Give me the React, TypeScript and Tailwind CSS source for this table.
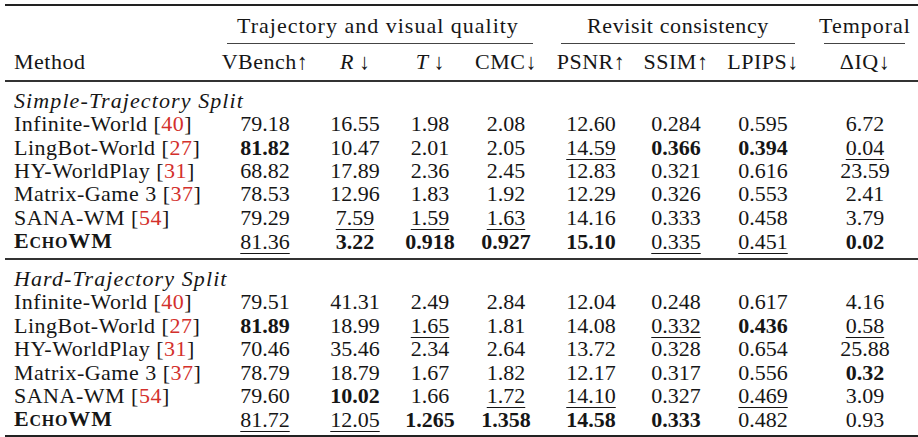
import React from "react";

type Cell = { v: string; b?: boolean; u?: boolean };

interface Row {
  name: string;
  cite?: string;
  ours?: boolean;
  cells: Cell[];
}

const c = (v: string, mark = ""): Cell => ({ v, b: mark === "b", u: mark === "u" });

const simple: Row[] = [
  { name: "Infinite-World", cite: "40", cells: [c("79.18"), c("16.55"), c("1.98"), c("2.08"), c("12.60"), c("0.284"), c("0.595"), c("6.72")] },
  { name: "LingBot-World", cite: "27", cells: [c("81.82", "b"), c("10.47"), c("2.01"), c("2.05"), c("14.59", "u"), c("0.366", "b"), c("0.394", "b"), c("0.04", "u")] },
  { name: "HY-WorldPlay", cite: "31", cells: [c("68.82"), c("17.89"), c("2.36"), c("2.45"), c("12.83"), c("0.321"), c("0.616"), c("23.59")] },
  { name: "Matrix-Game 3", cite: "37", cells: [c("78.53"), c("12.96"), c("1.83"), c("1.92"), c("12.29"), c("0.326"), c("0.553"), c("2.41")] },
  { name: "SANA-WM", cite: "54", cells: [c("79.29"), c("7.59", "u"), c("1.59", "u"), c("1.63", "u"), c("14.16"), c("0.333"), c("0.458"), c("3.79")] },
  { name: "EchoWM", ours: true, cells: [c("81.36", "u"), c("3.22", "b"), c("0.918", "b"), c("0.927", "b"), c("15.10", "b"), c("0.335", "u"), c("0.451", "u"), c("0.02", "b")] },
];

const hard: Row[] = [
  { name: "Infinite-World", cite: "40", cells: [c("79.51"), c("41.31"), c("2.49"), c("2.84"), c("12.04"), c("0.248"), c("0.617"), c("4.16")] },
  { name: "LingBot-World", cite: "27", cells: [c("81.89", "b"), c("18.99"), c("1.65", "u"), c("1.81"), c("14.08"), c("0.332", "u"), c("0.436", "b"), c("0.58", "u")] },
  { name: "HY-WorldPlay", cite: "31", cells: [c("70.46"), c("35.46"), c("2.34"), c("2.64"), c("13.72"), c("0.328"), c("0.654"), c("25.88")] },
  { name: "Matrix-Game 3", cite: "37", cells: [c("78.79"), c("18.79"), c("1.67"), c("1.82"), c("12.17"), c("0.317"), c("0.556"), c("0.32", "b")] },
  { name: "SANA-WM", cite: "54", cells: [c("79.60"), c("10.02", "b"), c("1.66"), c("1.72", "u"), c("14.10", "u"), c("0.327"), c("0.469", "u"), c("3.09")] },
  { name: "EchoWM", ours: true, cells: [c("81.72", "u"), c("12.05", "u"), c("1.265", "b"), c("1.358", "b"), c("14.58", "b"), c("0.333", "b"), c("0.482"), c("0.93")] },
];

const grid = "grid grid-cols-[207px_106px_74px_76px_76px_94px_76px_98px_106px]";

function Method({ row }: { row: Row }) {
  if (row.ours) {
    return (
      <span className="font-bold tracking-[0.8px]">
        E<span className="text-[16px]">CHO</span>WM
      </span>
    );
  }
  return (
    <span className="tracking-[0.5px]">
      {row.name} [<span className="text-[#d3302c]">{row.cite}</span>]
    </span>
  );
}

function DataRow({ row }: { row: Row }) {
  return (
    <div className={`${grid} h-[23.4px] items-center`}>
      <div className="pl-[9px] whitespace-nowrap">
        <Method row={row} />
      </div>
      {row.cells.map((cell, i) => (
        <div key={i} className="text-center">
          <span
            className={`${cell.b ? "font-bold" : ""} ${
              cell.u ? "underline decoration-1 underline-offset-[4px]" : ""
            }`}
          >
            {cell.v}
          </span>
        </div>
      ))}
    </div>
  );
}

function Section({ label, rows }: { label: string; rows: Row[] }) {
  return (
    <div>
      <div className="h-[23.4px] flex items-center pl-[9px] italic tracking-[1.1px]">{label}</div>
      {rows.map((r) => (
        <DataRow key={r.name} row={r} />
      ))}
    </div>
  );
}

export default function App() {
  return (
    <div
      className="w-[918px] h-[437px] bg-white text-[#161616] text-[22px] leading-[23.4px] pl-[5px] pt-[3.5px] overflow-hidden"
      style={{ fontFamily: '"Liberation Serif", "Times New Roman", serif' }}
    >
      <div className="h-[2.5px] bg-[#222]" />

      {/* group headings */}
      <div className={`${grid} h-[23.4px] items-center mt-[7.5px]`}>
        <div />
        <div className="col-span-4 text-center tracking-[1px]">Trajectory and visual quality</div>
        <div className="col-span-3 text-center tracking-[0.6px]">Revisit consistency</div>
        <div className="text-center tracking-[1px]">Temporal</div>
      </div>

      {/* cmidrules */}
      <div className={`${grid} mt-[6.5px]`}>
        <div />
        <div className="col-span-4 ml-[15px] mr-[11px] h-px bg-[#444]" />
        <div className="col-span-3 ml-[17px] mr-[17px] h-px bg-[#444]" />
        <div className="ml-[12px] mr-[13px] h-px bg-[#444]" />
      </div>

      {/* column headings */}
      <div className={`${grid} h-[23.4px] items-center mt-[5.5px]`}>
        <div className="pl-[9px] tracking-[0.5px]">Method</div>
        <div className="text-center tracking-[0.5px]">VBench↑</div>
        <div className="text-center">
          <span className="italic">R</span> ↓
        </div>
        <div className="text-center">
          <span className="italic">T</span> ↓
        </div>
        <div className="text-center tracking-[0.5px]">CMC↓</div>
        <div className="text-center tracking-[0.5px]">PSNR↑</div>
        <div className="text-center tracking-[0.5px]">SSIM↑</div>
        <div className="text-center tracking-[0.5px]">LPIPS↓</div>
        <div className="text-center tracking-[0.5px]">ΔIQ↓</div>
      </div>

      <div className="h-[1.5px] bg-[#333] mt-[7px]" />
      <div className="mt-[7px]">
        <Section label="Simple-Trajectory Split" rows={simple} />
      </div>
      <div className="h-[1.5px] bg-[#333] mt-[5.5px]" />
      <div className="mt-[7.5px]">
        <Section label="Hard-Trajectory Split" rows={hard} />
      </div>
      <div className="h-[2.5px] bg-[#222] mt-[4px]" />
    </div>
  );
}
